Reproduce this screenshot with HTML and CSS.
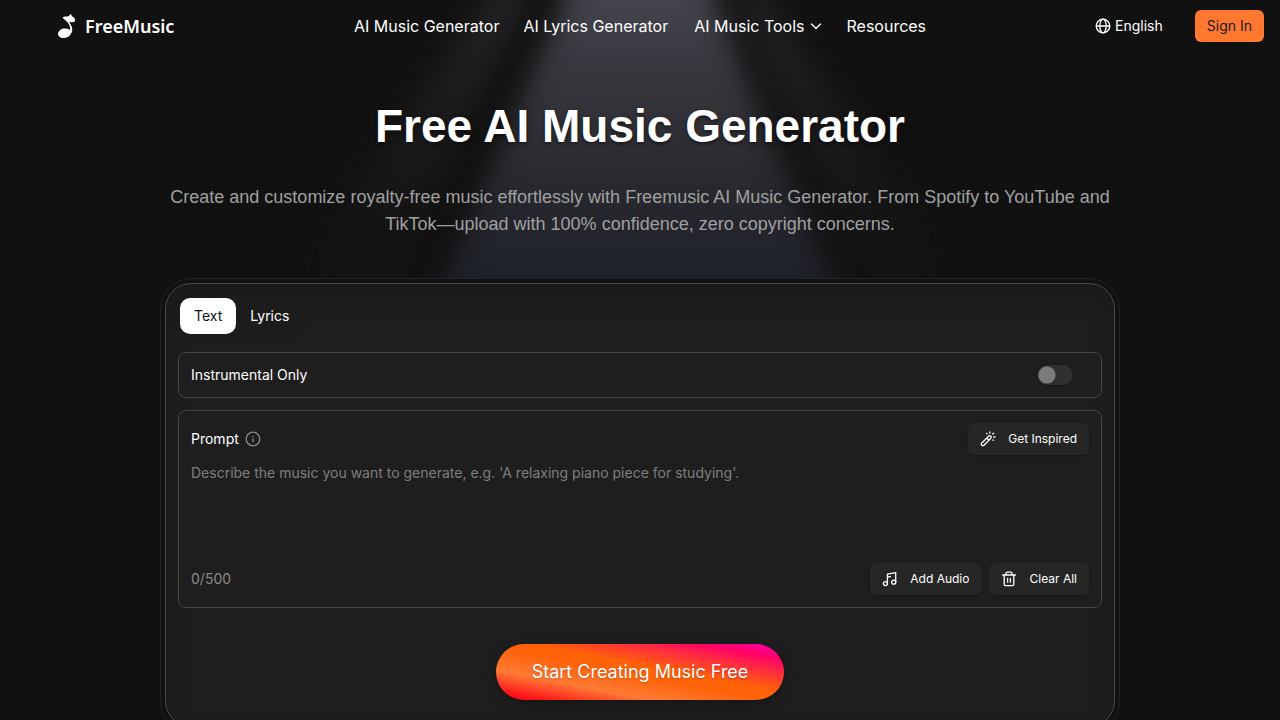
FILE: index.html
```html
<!DOCTYPE html>
<html lang="en">
<head>
<meta charset="utf-8">
<meta name="viewport" content="width=device-width, initial-scale=1">
<title>Free AI Music Generator</title>
<link rel="stylesheet" href="styles.css">
</head>
<body>
<svg class="spotlight" viewBox="0 0 1280 720" preserveAspectRatio="xMidYMin slice" aria-hidden="true">
  <defs>
    <linearGradient id="beam" x1="0" y1="0" x2="0" y2="720" gradientUnits="userSpaceOnUse">
      <stop offset="0" stop-color="#44444c"/>
      <stop offset=".07" stop-color="#3a3a42"/>
      <stop offset=".18" stop-color="#2f2f35"/>
      <stop offset=".27" stop-color="#27282e"/>
      <stop offset=".38" stop-color="#20222a"/>
      <stop offset=".7" stop-color="#111111"/>
    </linearGradient>
    <linearGradient id="side" x1="0" y1="0" x2="0" y2="720" gradientUnits="userSpaceOnUse">
      <stop offset="0" stop-color="#2a2a2e" stop-opacity=".9"/>
      <stop offset=".15" stop-color="#232326" stop-opacity=".6"/>
      <stop offset=".4" stop-color="#1c1c1f" stop-opacity=".1"/>
      <stop offset=".6" stop-color="#111" stop-opacity="0"/>
    </linearGradient>
    <filter id="soft" filterUnits="userSpaceOnUse" x="0" y="-100" width="1280" height="920" color-interpolation-filters="sRGB"><feGaussianBlur stdDeviation="14"/></filter>
    <filter id="softer" filterUnits="userSpaceOnUse" x="0" y="-100" width="1280" height="920" color-interpolation-filters="sRGB"><feGaussianBlur stdDeviation="16"/></filter>
  </defs>
  <path fill="url(#side)" filter="url(#softer)" d="M530-60 490 0 350 190 220 460 370 460 440 180 525 0zM735-60 765 0 900 190 1040 460 900 460 810 180 740 0z"/>
  <path fill="url(#beam)" filter="url(#soft)" d="M577-60 565 0 515 110 440 290 340 560 945 560 835 290 760 110 715 0 700-60z"/>
</svg>

<header class="topbar">
  <a class="brand" href="#">
    <svg class="brand-mark" width="20" height="26" viewBox="0 0 20 26" fill="#fff" aria-hidden="true">
      <path d="M5.500 4.400C7.500 3.300 9.400 3.600 11.500 3.300L14 .8 14.800 3.300C17.200 4.100 18.500 6 18 8.400 15.800 9.500 13.800 9.200 12.300 8.600 13 11 14.900 13 15.200 16 15.500 18.500 14.700 20 13.300 21.400L12.800 20C13.500 16.500 13.100 13 11.500 10.600 9.900 8.100 7.700 6.800 5.500 4.400z"/>
      <ellipse cx="7.500" cy="20.200" rx="6.600" ry="4.700" transform="rotate(-12 7.500 20.200)"/>
    </svg>
    <span class="brand-name">FreeMusic</span>
  </a>
  <nav class="nav" aria-label="Main">
    <a href="#">AI Music Generator</a>
    <a href="#">AI Lyrics Generator</a>
    <button class="nav-menu" type="button">AI Music Tools
      <svg class="icon" width="12" height="12" viewBox="0 0 12 12" aria-hidden="true"><path d="m1.500 4 4.500 4.500L10.500 4"/></svg>
    </button>
    <a href="#">Resources</a>
  </nav>
  <div class="account">
    <button class="language" type="button">
      <svg class="icon" width="16" height="16" viewBox="0 0 16 16" aria-hidden="true"><circle cx="8" cy="8" r="6.800"/><ellipse cx="8" cy="8" rx="3.200" ry="6.800"/><path d="M1.500 8h13"/></svg>
      English
    </button>
    <button class="sign-in" type="button">Sign In</button>
  </div>
</header>

<main class="page">
  <section class="hero">
    <h1>Free AI Music Generator</h1>
    <p>Create and customize royalty-free music effortlessly with Freemusic AI Music Generator. From Spotify to YouTube and TikTok—upload with 100% confidence, zero copyright concerns.</p>
  </section>

  <form class="card">
    <div class="tabs" role="tablist">
      <button class="tab tab-active" type="button" role="tab" aria-selected="true">Text</button>
      <button class="tab" type="button" role="tab" aria-selected="false">Lyrics</button>
    </div>

    <div class="panel option">
      <label for="instrumental">Instrumental Only</label>
      <input class="switch" id="instrumental" type="checkbox" role="switch">
    </div>

    <div class="panel prompt">
      <div class="row">
        <div class="prompt-label">
          <label for="prompt">Prompt</label>
          <svg class="icon muted" width="16" height="16" viewBox="0 0 16 16" aria-hidden="true"><circle cx="8" cy="8" r="6.800"/><path d="M8 7.700v2.900M8 5.300v.1"/></svg>
        </div>
        <button class="tool" type="button">
          <svg class="icon" width="16" height="16" viewBox="0 0 16 16" aria-hidden="true"><path d="m1.800 12 6.800-6.800a1.300 1.300 0 0 1 2.200 2.200L4 14.200A1.500 1.500 0 0 1 1.800 12zM6.800 7l2.200 2.200"/><path d="M6.700 2.400l.3.500M9.800 1v1.200M13.600 2.200l-.8.800M13.800 6h1.200M12.900 8.900l.4.400"/></svg>
          Get Inspired
        </button>
      </div>
      <textarea id="prompt" maxlength="500" placeholder="Describe the music you want to generate, e.g. 'A relaxing piano piece for studying'."></textarea>
      <div class="row">
        <span class="counter">0/500</span>
        <div class="tools">
          <button class="tool" type="button">
            <svg class="icon" width="16" height="16" viewBox="0 0 16 16" aria-hidden="true"><circle cx="3.400" cy="12.600" r="2"/><circle cx="11.700" cy="11.200" r="2"/><path d="M5.400 12.600V3.200l8.300-1.600v9.600M5.400 6.200l3-.6"/></svg>
            Add Audio
          </button>
          <button class="tool" type="button">
            <svg class="icon" width="16" height="16" viewBox="0 0 16 16" aria-hidden="true"><path d="M1.600 4h12.800M5 4V2.400A1.200 1.200 0 0 1 6.200 1.200h3.600A1.200 1.200 0 0 1 11 2.400V4M3.200 4v9.200c0 .8.600 1.400 1.400 1.400h6.800c.8 0 1.400-.6 1.400-1.400V4M6.600 7.500v3.700M9.400 7.500v3.700"/></svg>
            Clear All
          </button>
        </div>
      </div>
    </div>

    <button class="cta" type="submit">Start Creating Music Free</button>
  </form>
</main>
</body>
</html>
```
FILE: styles.css
```css
* { box-sizing: border-box; }

body {
  margin: 0;
  min-height: 100vh;
  background: #111;
  color: #fff;
  font-family: Inter, "Liberation Sans", sans-serif;
  font-size: 14px;
  line-height: 20px;
}

button, input, textarea { font: inherit; color: inherit; }
button { border: 0; padding: 0; background: none; cursor: pointer; }
a { color: inherit; text-decoration: none; }

.spotlight {
  position: absolute;
  inset: 0;
  z-index: -1;
  width: 100%;
  height: 100%;
}

.icon {
  flex: none;
  fill: none;
  stroke: currentColor;
  stroke-width: 1.3;
  stroke-linecap: round;
  stroke-linejoin: round;
}

.muted { color: #8b8b8b; }

.topbar {
  display: grid;
  grid-template-columns: 1fr auto 1fr;
  align-items: center;
  height: 52px;
  padding: 0 16px;
}

.brand {
  display: flex;
  align-items: center;
  gap: 8px;
  padding-left: 41px;
}

.brand-name {
  font: 600 18px/24px "Noto Sans", sans-serif;
}

.nav {
  display: flex;
  align-items: center;
  gap: 24px;
  font-size: 16px;
  line-height: 24px;
}

.nav-menu {
  display: flex;
  align-items: center;
  gap: 6px;
  padding-left: 2px;
}

.account {
  display: flex;
  justify-content: flex-end;
  align-items: center;
  gap: 32px;
}

.language {
  display: flex;
  align-items: center;
  gap: 4px;
}

.sign-in {
  height: 32px;
  padding: 0 12px;
  border-radius: 6px;
  background: #ff7830;
  color: #1b1b1b;
}

.page {
  max-width: 992px;
  margin: 0 auto;
  padding: 46px 16px 24px;
}

.hero { text-align: center; }

.hero h1 {
  margin: 0;
  font: 700 46px/56px "Liberation Sans", Arial, sans-serif;
  text-shadow: 0 2px 4px rgba(0, 0, 0, .5);
}

.hero p {
  max-width: 950px;
  margin: 30px auto 0;
  color: #a0a0a0;
  font: 18px/27px "Liberation Sans", Arial, sans-serif;
}

.card {
  display: flex;
  flex-direction: column;
  margin: 45px 5px 0;
  padding: 12px 12px 26px;
  border: 1px solid #4a4a4a;
  border-radius: 26px;
  outline: 1px solid #242424;
  outline-offset: 4px;
  background: #1e1e1e;
  box-shadow: inset 0 8px 24px rgba(0, 0, 0, .2), 0 0 0 4px #111;
}

.tabs {
  display: flex;
  align-self: flex-start;
  padding: 2px;
  border-radius: 12px;
  background: #1c1c1c;
  box-shadow: 0 0 3px rgba(0, 0, 0, .2);
}

.tab {
  height: 36px;
  padding: 0 14px;
  border-radius: 10px;
}

.tab-active {
  background: #fff;
  color: #111;
}

.panel {
  border: 1px solid #454545;
  border-radius: 8px;
  background: #1e1e1e;
}

.option {
  display: flex;
  align-items: center;
  justify-content: space-between;
  margin-top: 16px;
  padding: 12px 28px 12px 12px;
}

.switch {
  appearance: none;
  width: 36px;
  height: 20px;
  margin: 0;
  border-radius: 10px;
  background: radial-gradient(circle at 10px 10px, #7b7b7b 8px, #303030 9px);
  box-shadow: 0 0 2px rgba(0, 0, 0, .4);
}

.prompt {
  margin-top: 12px;
  padding: 12px;
}

.row, .tools, .prompt-label {
  display: flex;
  align-items: center;
}

.row { justify-content: space-between; }
.tools { gap: 8px; }
.prompt-label { gap: 6px; }

.tool {
  display: flex;
  align-items: center;
  gap: 12px;
  height: 32px;
  padding: 0 12px;
  border-radius: 6px;
  background: #262626;
  box-shadow: 0 1px 3px rgba(0, 0, 0, .2);
  font-size: 12px;
}

.prompt textarea {
  display: block;
  width: 100%;
  height: 100px;
  margin: 8px 0 0;
  padding: 0;
  border: 0;
  outline: 0;
  resize: none;
  background: none;
}

.prompt textarea::placeholder { color: #7e7e7e; }
.counter { color: #8b8b8b; }

.cta {
  align-self: center;
  height: 56px;
  margin-top: 36px;
  padding: 0 36px;
  border-radius: 28px;
  background: linear-gradient(11deg, #ff0014 4%, #ff7a35 27%, #ff6207 48%, #ff6207 56%, #ff2c40 74%, #ff0068 86%, #ff00a8 98%);
  box-shadow: 0 4px 12px rgba(0, 0, 0, .3);
  font-size: 18px;
  text-shadow: 0 1px 2px rgba(0, 0, 0, .25);
}
```
